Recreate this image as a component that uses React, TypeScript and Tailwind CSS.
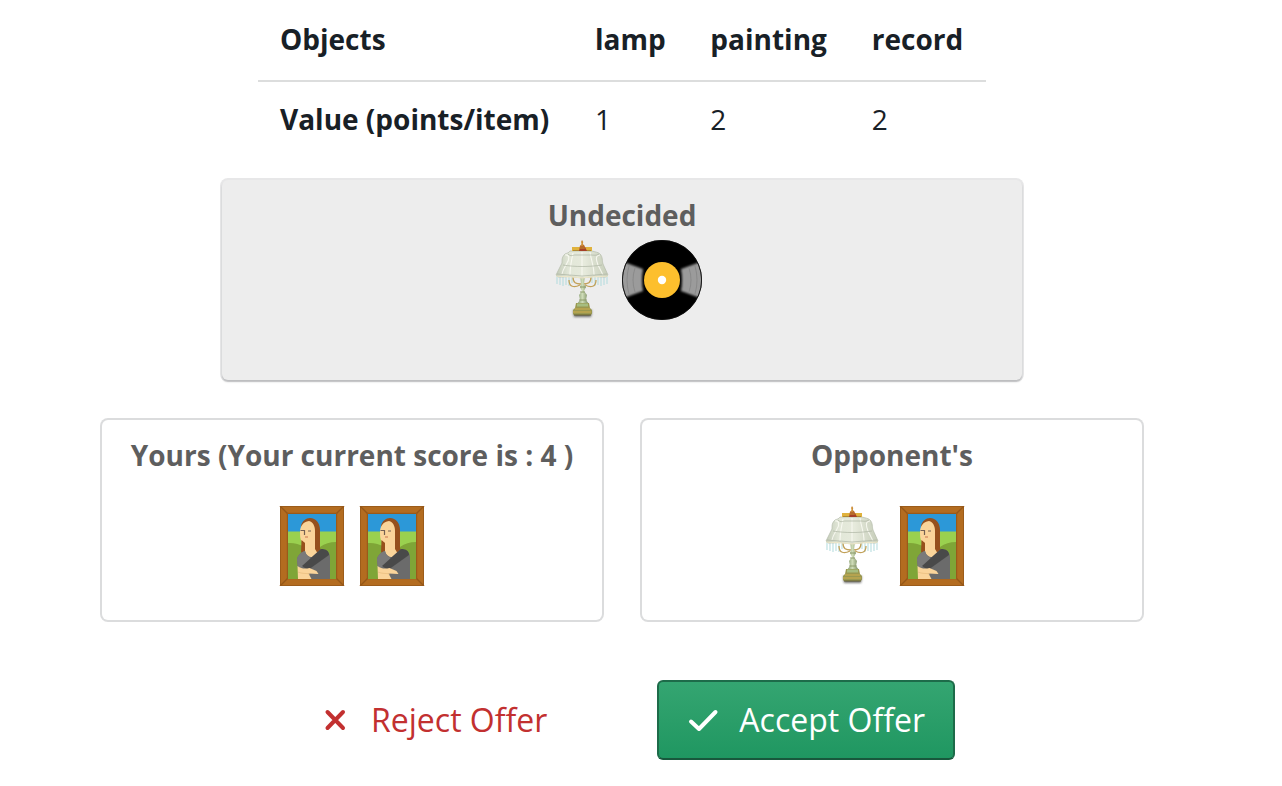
import React from "react";

function Lamp() {
  return (
    <svg viewBox="0 0 80 80" className="size-20" role="img" aria-label="lamp">
      <defs>
        <linearGradient id="shade" x1="0" y1="0" x2="1" y2="0">
          <stop offset="0" stopColor="#c3cbb8" />
          <stop offset=".25" stopColor="#e2e7d8" />
          <stop offset=".55" stopColor="#e6eadc" />
          <stop offset="1" stopColor="#c6cdb9" />
        </linearGradient>
        <linearGradient id="stem" x1="0" y1="0" x2="1" y2="0">
          <stop offset="0" stopColor="#7d9468" />
          <stop offset=".45" stopColor="#cfdcb8" />
          <stop offset="1" stopColor="#708358" />
        </linearGradient>
        <filter id="soft" x="-30%" y="-60%" width="160%" height="220%">
          <feGaussianBlur stdDeviation="1" />
        </filter>
      </defs>
      <path d="M31 70h19l-1 7H32z" fill="#444" opacity=".75" filter="url(#soft)" />
      <path d="M15 35v9M18 36v9M21 36v10M24 36v9M27 37v9M30 37v6M50 37v6M53 37v9M56 36v9M59 36v10M62 36v9M65 35v9" stroke="#b4dcde" strokeWidth="1.4" opacity=".75" />
      <path d="M27 40c0 7 5 8 11 5M54 40c0 7-5 8-11 5M31 37c0 6 3 7 8 7M49 37c0 6-3 7-8 7" fill="none" stroke="#c2a159" strokeWidth="1.3" />
      <path d="M38 36h5l-1 8 2 3-2 4 3 4-1 5 3 4h-12l3-4-1-5 3-4-2-4 1-3z" fill="url(#stem)" />
      <path d="M38 47h6M38 52h5M37 60h8" stroke="#879463" strokeWidth=".9" />
      <path d="M34 63h13l1 5 2 2v4l-2 1H32l-1-1v-4l2-2z" fill="#9a9850" />
      <path d="M35 65h11" stroke="#a6bd7f" strokeWidth="3" />
      <path d="M33 69h15M31 72h18" stroke="#cfae4e" strokeWidth="1.2" />
      <path d="M32 75h17" stroke="#625e34" strokeWidth="1" />
      <path d="M30 11h20c3 1 6 1 8 3 3 3 2 7 3 10l5 11-2 2c-4 0-8 0-12-1-4 2-8 1-12 2-4-1-8 0-12-2-4 1-8 1-12 1l-2-2 6-12c0-4 0-6 3-9 2-1 4-1 5-3z" fill="url(#shade)" stroke="#b4bbaa" strokeWidth=".7" />
      <path d="M23 15c4-1 5 3 2 8-2 4-4 6-5 11M31 13c-1 6-3 13-3 22M40 12v24M48 12c1 8 4 14 4 23M58 15c-5 0-4 5-2 10l5 10" fill="none" stroke="#fbfcf4" strokeWidth="1.1" opacity=".85" />
      <path d="M26 14c3 3 5 1 7 1h16c3 0 5 1 8-1M21 25c12 2 26 2 39 0M15 34c8 1 17 1 25 2 8-1 17-1 25-2" fill="none" stroke="#aeb5a3" strokeWidth=".7" />
      <path d="M14 36c8 1 18 0 26 2 8-2 18-1 26-2" fill="none" stroke="#ece6c9" strokeWidth="1.2" />
      <path d="M30 7h20v4H30z" fill="#e0b23d" />
      <path d="M31 10.5h18" stroke="#ad8a35" />
      <path d="M38 7h5l2 4h-8z" fill="#a53f27" />
      <path d="M40 0l1.2 2-.4 2 2 2v3h-5V6l2-2-.6-2z" fill="#b86b2c" />
      <path d="M40 1v5" stroke="#dfb047" />
    </svg>
  );
}

function Disc() {
  return (
    <svg viewBox="0 0 80 80" className="size-20" role="img" aria-label="record">
      <defs>
        <clipPath id="disc"><circle cx="40" cy="40" r="39.4" /></clipPath>
        <filter id="shine" x="-20%" y="-20%" width="140%" height="140%">
          <feGaussianBlur stdDeviation="1" />
        </filter>
      </defs>
      <circle cx="40" cy="40" r="40" fill="#000" />
      <g clipPath="url(#disc)">
        <path d="M-4 20L21 29q-2 11 0 22L-4 60zM84 20L59 29q2 11 0 22l25 9z" fill="#9b9b9b" filter="url(#shine)" />
        <g fill="none" stroke="#838383" strokeWidth=".7">
          <path d="M7 26q-4 14 0 28M13 28q-4 12 0 24M73 26q4 14 0 28M67 28q4 12 0 24" />
        </g>
      </g>
      <circle cx="40" cy="40" r="39.6" fill="none" stroke="#111" strokeWidth=".8" />
      <circle cx="40" cy="40" r="18" fill="#fdbf2d" />
      <circle cx="40" cy="40" r="4.2" fill="#fff" />
    </svg>
  );
}

function Painting() {
  return (
    <svg viewBox="-8 0 80 80" className="size-20" role="img" aria-label="painting">
      <path d="M0 0h64v80H0z" fill="#b36c20" />
      <path d="M.5.5h63v79H.5z" fill="none" stroke="#9c5c1a" />
      <path d="M0 0l8 8M64 0l-8 8M0 80l8-8M64 80l-8-8" stroke="#955718" strokeWidth="1.4" />
      <path d="M6.800 6.800h50.400v66.400H6.800z" fill="#9a5a1a" />
      <path d="M8 8h48v18H8z" fill="#2c98d8" />
      <path d="M8 25.500h48V73H8z" fill="#9ad04f" />
      <path d="M8 37q9-.5 16 4h16q7-5 16-5v37H8z" fill="#7fa537" />
      <path d="M21 20c1-5 5-8 9-8 6 0 10 5 10 12v18l3 6H22V36z" fill="#96501d" />
      <path d="M20 26c0-6 3-10 9-11 4 1 6 5 6 10v18l3 5-8 8-8-7 3-4v-8c-4 0-5-4-5-11z" fill="#fad49a" />
      <path d="M21.500 34l3.500 3v7l-4 3z" fill="#96501d" />
      <path d="M17 54c0-4 4-8 8-9 1 4 4 6 7 6l9-8c5 0 9 3 9 8v22H18V62z" fill="#6b6b6b" />
      <path d="M17 54c0-4 4-8 8-9 1 4 3 6 6 7l-8 9-5 2z" fill="#7a7a7a" />
      <path d="M41 43c5 0 8 2 8 6L28 64l-6-4 10-9z" fill="#494949" />
      <path d="M17.500 60c4 3 8 3 12 2l7 3 2 3-10-.500 3 5.500H18z" fill="#fad49a" />
      <path d="M18 66c4 2 8 1 12 2" fill="none" stroke="#e8bb7d" strokeWidth=".7" />
      <path d="M20.500 24.500h4V29M28 25h3" fill="none" stroke="#746052" strokeWidth="1.200" />
      <path d="M25 31h3" stroke="#c6744f" strokeWidth="1" />
    </svg>
  );
}

const columns = [
  { name: "lamp", value: 1 },
  { name: "painting", value: 2 },
  { name: "record", value: 2 },
];

function Card({ title, className, itemsClass, children }: { title: string; className: string; itemsClass: string; children: React.ReactNode }) {
  return (
    <section className={`min-h-[200px] rounded-md px-4 pt-4 ${className}`}>
      <h2 className="text-center font-bold text-[#5e5e5e]">{title}</h2>
      <div className={`flex justify-center ${itemsClass}`}>{children}</div>
    </section>
  );
}

export default function App() {
  return (
    <main className="bg-white pr-[38px] pb-6 font-['Open_Sans','Noto_Sans',sans-serif] text-[28px] leading-[38px] text-[#182026]">
      <div className="mx-auto flex max-w-[1040px] flex-col">
        <table className="mx-auto w-[728px] border-separate border-spacing-0 text-left">
          <thead>
            <tr>
              <th scope="col" className="px-[22px] pt-5 pb-[22px] font-bold">Objects</th>
              {columns.map((c) => (
                <th key={c.name} scope="col" className="px-[22px] pt-5 pb-[22px] font-bold">{c.name}</th>
              ))}
            </tr>
          </thead>
          <tbody>
            <tr>
              <th scope="row" className="px-[22px] pt-5 pb-[22px] font-bold shadow-[inset_0_2px_0_#dcdddd]">Value (points/item)</th>
              {columns.map((c) => (
                <td key={c.name} className="px-[22px] pt-5 pb-[22px] shadow-[inset_0_2px_0_#dcdddd]">{c.value}</td>
              ))}
            </tr>
          </tbody>
        </table>

        <Card title="Undecided" className="mx-auto mt-5 w-full max-w-[800px] bg-[#ededed] shadow-[0_0_0_2px_rgba(16,22,26,0.1),0_2px_2px_rgba(16,22,26,0.2)]" itemsClass="mt-[6px]">
          <Lamp />
          <Disc />
        </Card>

        <div className="mt-10 grid grid-cols-2 gap-10">
          <Card title="Yours (Your current score is : 4 )" className="bg-white shadow-[0_0_0_2px_rgba(16,22,26,0.15)]" itemsClass="mt-8">
            <Painting />
            <Painting />
          </Card>
          <Card title="Opponent's" className="bg-white shadow-[0_0_0_2px_rgba(16,22,26,0.15)]" itemsClass="mt-8">
            <Lamp />
            <Painting />
          </Card>
        </div>

        <div className="mt-[60px] flex justify-center gap-20 text-[32px]">
          <button type="button" className="flex h-20 items-center gap-5 rounded-md px-[30px] text-[#c23030]">
            <svg viewBox="0 0 32 32" className="size-8" fill="none" stroke="currentColor" strokeWidth="4" strokeLinecap="round" aria-hidden="true">
              <path d="M8.500 8l15.500 16M24 8L8.500 24" />
            </svg>
            Reject Offer
          </button>
          <button type="button" className="flex h-20 items-center gap-5 rounded-md border-2 border-[#1d6b49] border-b-[#18583c] bg-linear-to-b from-[#34a571] to-[#1f9761] px-7 text-white">
            <svg viewBox="0 0 32 32" className="size-8" fill="none" stroke="currentColor" strokeWidth="4" strokeLinecap="round" strokeLinejoin="round" aria-hidden="true">
              <path d="M4 17.500l8 7.500L28.500 8" />
            </svg>
            Accept Offer
          </button>
        </div>
      </div>
    </main>
  );
}
